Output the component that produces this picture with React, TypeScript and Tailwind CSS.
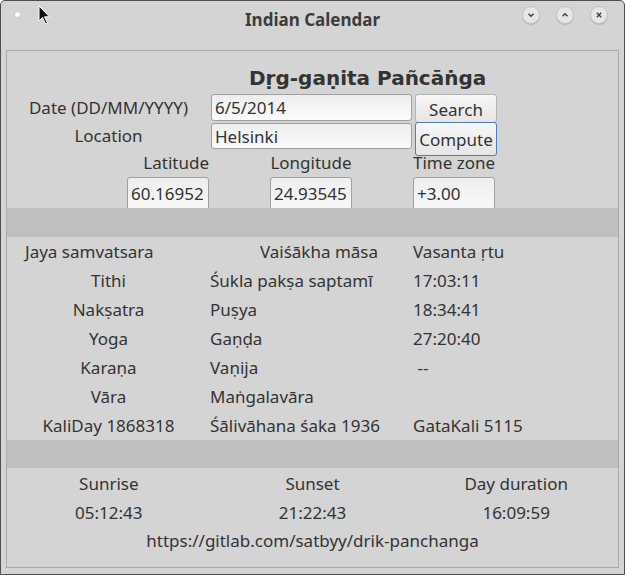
import React from 'react';

const dataRows: [string, string, string][] = [
    ['Tithi', 'Śukla pakṣa saptamī', '17:03:11'],
    ['Nakṣatra', 'Puṣya', '18:34:41'],
    ['Yoga', 'Gaṇḍa', '27:20:40'],
    ['Karaṇa', 'Vaṇija', ' --'],
    ['Vāra', 'Maṅgalavāra', ''],
    ['KaliDay 1868318', 'Śālivāhana śaka 1936', 'GataKali 5115'],
];

const WinButton = ({ children }: { children: React.ReactNode }) => (
    <div className="w-[18px] h-[18px] rounded-full bg-[#e6e6e6] border border-[#c4c4c4] shadow-[0_1px_1px_rgba(0,0,0,0.15)] flex items-center justify-center">
        {children}
    </div>
);

const Field = ({ value, className }: { value: string; className: string }) => (
    <div className={`border border-[#a0a0a0] rounded-[3px] bg-gradient-to-b from-[#eeeeee] to-[#fbfbfb] flex items-center pl-[3px] text-[#333] ${className}`}>
        {value}
    </div>
);

export default function App() {
    return (
        <div className="w-[625px] h-[575px] bg-[#d4d4d4] border border-[#4e4e4e] rounded-t-[5px] relative overflow-hidden text-[#333] font-['Noto_Sans',sans-serif]">
            {/* Title bar */}
            <div className="h-[49px] relative">
                <div className="absolute left-[13px] top-[10px] w-[7px] h-[7px] rounded-full bg-white border border-[#c8c8c8]"></div>
                <svg className="absolute left-[37px] top-[4px]" width="14" height="20" viewBox="0 0 14 20">
                    <path d="M1 1 L1 16 L4.5 12.5 L7.5 19 L9.5 18 L6.5 11.8 L11.5 11.8 Z" fill="#111" stroke="#fff" strokeWidth="1" />
                </svg>
                <div className="w-full text-center pt-[6px] text-[17px] font-bold text-[#3c3c3c]">Indian Calendar</div>
                <div className="absolute right-[16px] top-[5px] flex gap-[16px]">
                    <WinButton>
                        <svg width="10" height="10" viewBox="0 0 10 10"><path d="M2.5 3.8 L5 6.3 L7.5 3.8" fill="none" stroke="#444" strokeWidth="1.5" /></svg>
                    </WinButton>
                    <WinButton>
                        <svg width="10" height="10" viewBox="0 0 10 10"><path d="M2.5 6.2 L5 3.7 L7.5 6.2" fill="none" stroke="#444" strokeWidth="1.5" /></svg>
                    </WinButton>
                    <WinButton>
                        <svg width="10" height="10" viewBox="0 0 10 10"><path d="M2.8 2.8 L7.2 7.2 M7.2 2.8 L2.8 7.2" fill="none" stroke="#444" strokeWidth="1.5" /></svg>
                    </WinButton>
                </div>
            </div>

            {/* Frame */}
            <div className="mx-[5px] h-[518px] border border-[#a9a9a9] flex flex-col text-[17px] leading-none">
                {/* Heading */}
                <div className="h-[43px] flex items-end pb-[6px] pl-[242px]">
                    <span className="text-[20px] font-bold text-[#333] font-['DejaVu_Sans',sans-serif]">Dṛg-gaṇita Pañcāṅga</span>
                </div>

                {/* Date row */}
                <div className="h-[28px] flex items-start">
                    <div className="w-[203px] h-[26px] flex items-center justify-center">Date (DD/MM/YYYY)</div>
                    <Field value="6/5/2014" className="ml-[1px] w-[201px] h-[27px]" />
                    <div className="ml-[3px] w-[82px] h-[29px] border border-[#b4b4b4] rounded-[3px] bg-gradient-to-b from-[#f6f6f6] to-[#e6e6e6] flex items-end justify-center pb-[4px]">Search</div>
                </div>

                {/* Location row */}
                <div className="h-[32px] flex items-start">
                    <div className="w-[203px] h-[26px] flex items-center justify-center">Location</div>
                    <Field value="Helsinki" className="ml-[1px] w-[201px] h-[26px] mt-[1px]" />
                    <div className="ml-[3px] w-[82px] h-[34px] shrink-0 border border-[#4f7fb8] rounded-[3px] bg-gradient-to-b from-[#f6f6f6] to-[#e6e6e6] flex items-center justify-center">Compute</div>
                </div>

                {/* Coordinates labels */}
                <div className="h-[23px] flex items-start">
                    <div className="ml-[120px] w-[82px] text-right">Latitude</div>
                    <div className="ml-[61px] w-[82px] text-center">Longitude</div>
                    <div className="ml-[61px] w-[82px] text-left whitespace-nowrap">Time zone</div>
                </div>

                {/* Coordinates inputs (clipped by band) */}
                <div className="h-[31px] flex items-start overflow-hidden">
                    <Field value="60.16952" className="ml-[120px] w-[82px] h-[40px] pb-[8px]" />
                    <Field value="24.93545" className="ml-[61px] w-[82px] h-[40px] pb-[8px]" />
                    <Field value="+3.00" className="ml-[61px] w-[82px] h-[40px] pb-[8px]" />
                </div>

                <div className="h-[29px] bg-[#bfbfbf]"></div>

                {/* Data grid */}
                <div className="grid grid-cols-[203px_203px_1fr] auto-rows-[29px] items-center">
                    <div className="pl-[18px] whitespace-nowrap">Jaya samvatsara</div>
                    <div className="text-right pr-[35px]">Vaiśākha māsa</div>
                    <div>Vasanta ṛtu</div>
                    {dataRows.map(([a, b, c]) => (
                        <React.Fragment key={a}>
                            <div className="text-center">{a}</div>
                            <div className="whitespace-pre">{b}</div>
                            <div className="whitespace-pre">{c}</div>
                        </React.Fragment>
                    ))}
                </div>

                <div className="h-[28px] bg-[#bfbfbf]"></div>

                {/* Sun times */}
                <div className="grid grid-cols-3 auto-rows-[29px] items-center text-center pt-[1px]">
                    <div>Sunrise</div>
                    <div>Sunset</div>
                    <div>Day duration</div>
                    <div>05:12:43</div>
                    <div>21:22:43</div>
                    <div>16:09:59</div>
                    <div className="col-span-3 -mt-[2px]">https://gitlab.com/satbyy/drik-panchanga</div>
                </div>
            </div>
        </div>
    );
}
